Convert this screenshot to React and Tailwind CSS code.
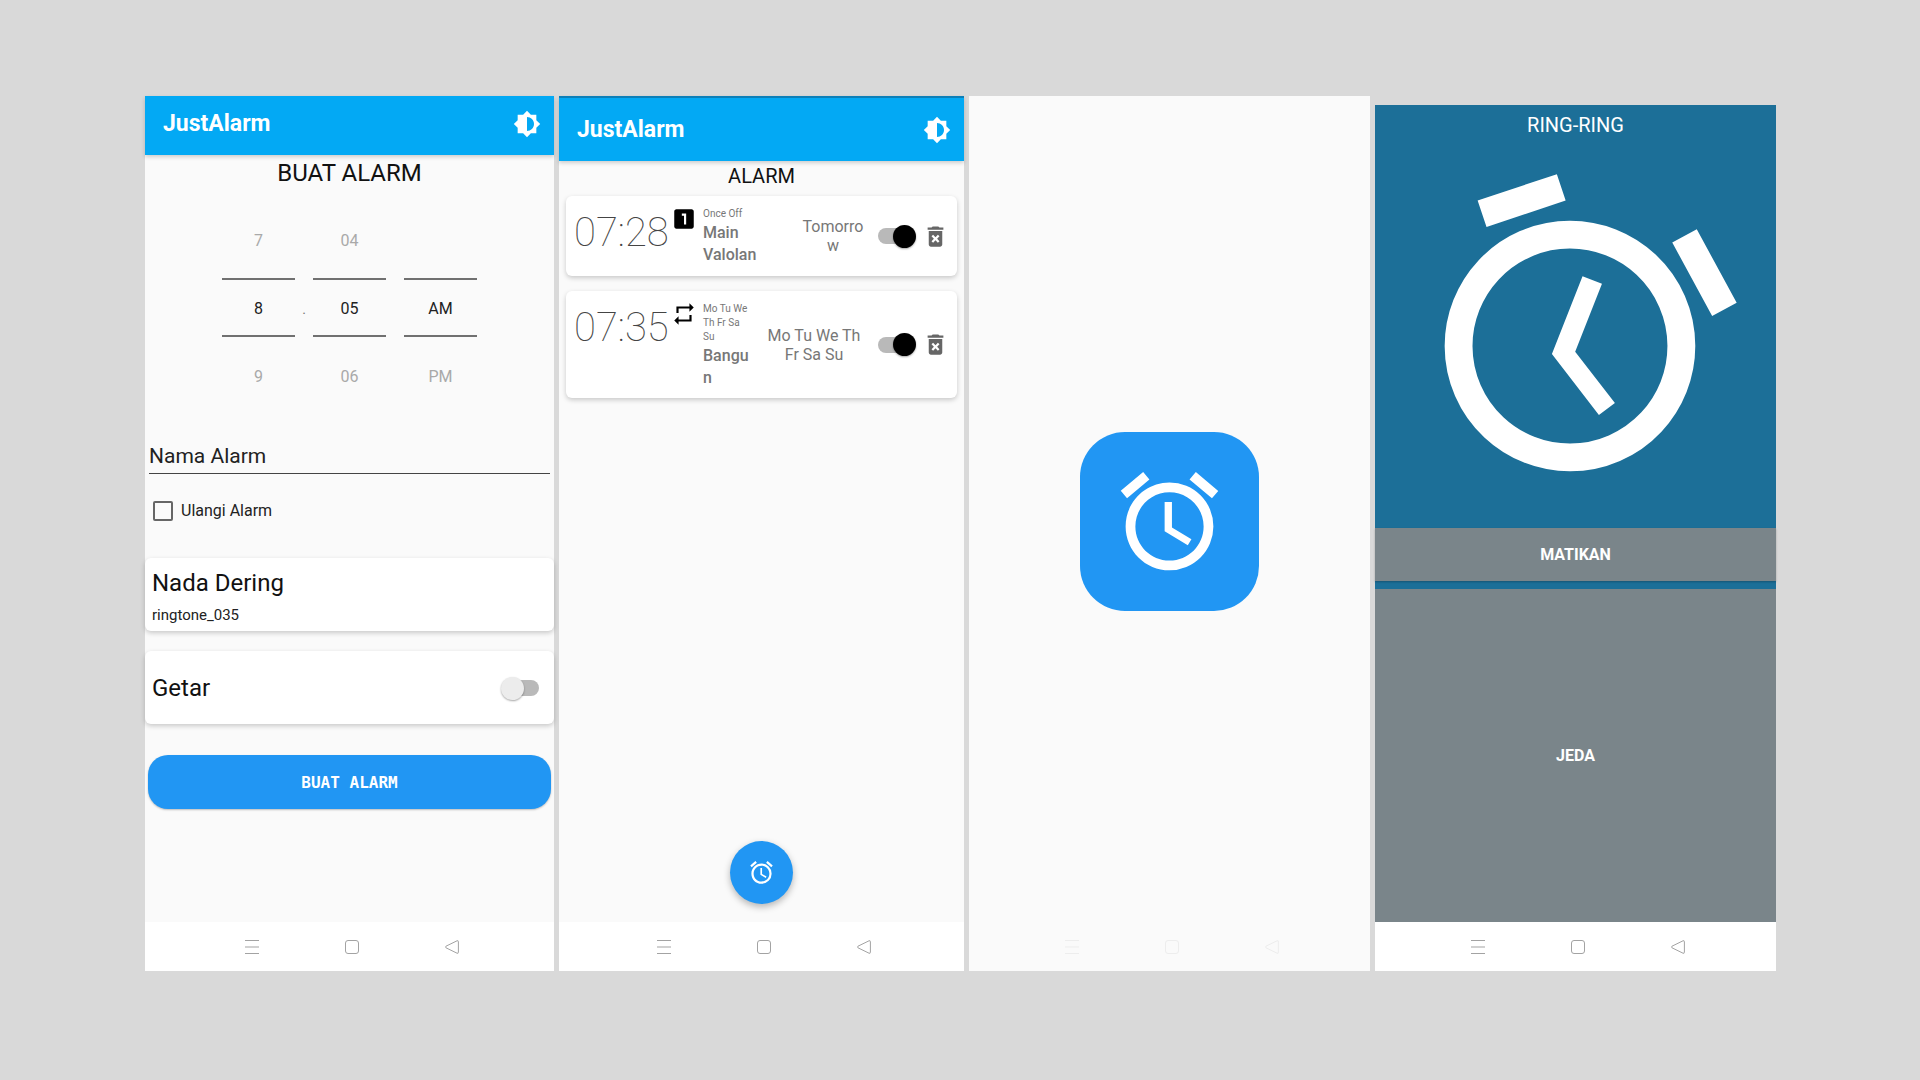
import { MdBrightness6, MdAccessAlarm, MdDeleteForever, MdLooksOne, MdRepeat } from "react-icons/md";

function TopBar({ className = "" }) {
  return (
    <header className={`flex shrink-0 items-center justify-between bg-[#03a9f4] pl-[18px] pr-[13px] text-white shadow-[0_2px_4px_rgba(0,0,0,0.18)] ${className}`}>
      <h1 className="pt-px text-[23px] font-bold leading-7">JustAlarm</h1>
      <button type="button" aria-label="Tema">
        <MdBrightness6 className="size-7" />
      </button>
    </header>
  );
}

function NavBar({ className = "bg-white text-[#a3a3a3]" }) {
  return (
    <nav className={`flex h-[49px] shrink-0 items-center justify-center gap-[84px] pl-1 ${className}`}>
      <button type="button" aria-label="Menu">
        <svg viewBox="0 0 16 16" className="size-4" fill="none" stroke="currentColor">
          <path d="M1 1.5h14M1 8h14M1 14.5h14" />
        </svg>
      </button>
      <button type="button" aria-label="Beranda">
        <svg viewBox="0 0 16 16" className="size-4" fill="none" stroke="currentColor">
          <rect x="1.5" y="1.5" width="13" height="13" rx="2.5" />
        </svg>
      </button>
      <button type="button" aria-label="Kembali">
        <svg viewBox="0 0 16 16" className="size-4" fill="none" stroke="currentColor" strokeLinejoin="round">
          <path d="M13 1.8 2 7.2q-1.2.8 0 1.6L13 14.2q1.4.5 1.4-.9V2.7q0-1.4-1.4-.9z" />
        </svg>
      </button>
    </nav>
  );
}

function Switch({ on = false, label }) {
  return (
    <label className="relative flex h-6 w-[38px] shrink-0 cursor-pointer items-center">
      <input type="checkbox" role="switch" defaultChecked={on} aria-label={label} className="peer sr-only" />
      <span className="ml-1 h-4 w-[34px] rounded-full bg-[#b9b9b9] peer-checked:ml-0" />
      <span className="absolute left-0 size-[23px] rounded-full bg-[#ececec] shadow-[0_1px_2px_rgba(0,0,0,0.35)] peer-checked:left-[15px] peer-checked:bg-black" />
    </label>
  );
}

function Wheel({ before, value, after }) {
  return (
    <div className="flex w-[73px] flex-col text-base text-[#a9a9a9]">
      <button type="button" className="h-6 leading-6">{before}</button>
      <div className="mt-[25px] flex h-[59px] items-center justify-center border-y-2 border-[#707070] pt-0.5 text-[#222]">
        {value}
      </div>
      <button type="button" className="mt-7 h-6 leading-6">{after}</button>
    </div>
  );
}

function CreateScreen() {
  return (
    <section className="flex flex-col bg-[#fafafa]">
      <TopBar className="h-[59px] pb-1" />
      <main className="flex flex-1 flex-col">
        <h2 className="mt-0.5 text-center text-2xl leading-8 text-[#111]">BUAT ALARM</h2>
        <div className="mt-10 flex justify-center gap-[18px]">
          <Wheel before="7" value="8" after="9" />
          <div className="-mx-[18px] flex w-[18px] items-center justify-center text-sm text-[#777]">.</div>
          <Wheel before="04" value="05" after="06" />
          <Wheel before="" value="AM" after="PM" />
        </div>
        <input
          type="text"
          aria-label="Nama Alarm"
          placeholder="Nama Alarm"
          className="mx-1 mt-[52px] h-[33px] border-b border-[#444] pb-0.5 text-[21px] text-[#222] outline-none placeholder:text-[#222]"
        />
        <label className="mt-[25px] flex items-center gap-2 pl-2 text-base leading-6 text-[#222]">
          <input type="checkbox" className="size-5 appearance-none rounded-xs border-2 border-[#666] checked:bg-[#666]" />
          Ulangi Alarm
        </label>
        <button type="button" className="mt-[35px] flex h-[73px] flex-col justify-center rounded-md bg-white pl-[7px] text-left shadow-[0_2px_5px_rgba(0,0,0,0.2)]">
          <span className="text-2xl leading-8 text-[#111]">Nada Dering</span>
          <span className="mt-1 mb-[-4px] text-[15px] leading-6 text-[#222]">ringtone_035</span>
        </button>
        <div className="mt-5 flex h-[73px] items-center justify-between rounded-md bg-white pl-[7px] pr-[15px] pt-px shadow-[0_2px_5px_rgba(0,0,0,0.2)]">
          <span className="text-2xl leading-8 text-[#111]">Getar</span>
          <Switch label="Getar" />
        </div>
        <button type="button" className="mx-[3px] mt-[31px] h-[54px] rounded-[20px] bg-[#2196f3] pt-px font-['DejaVu_Sans_Mono',monospace] text-base font-bold text-white shadow-[0_1px_2px_rgba(0,0,0,0.25)]">
          BUAT ALARM
        </button>
      </main>
      <NavBar />
    </section>
  );
}

function AlarmCard({ time, Icon, repeat, name, days, className, nameClass, daysClass }) {
  return (
    <li className={`flex rounded-md bg-white pl-2 pr-2 text-[#777] shadow-[0_2px_5px_rgba(0,0,0,0.2)] ${className}`}>
      <time className="w-[97px] shrink-0 pt-[13px] text-[40px] font-thin leading-12 text-[#444]">{time}</time>
      <Icon className="mt-[10px] size-[26px] shrink-0 text-black" />
      <div className={`ml-[6px] shrink-0 pt-[11px] ${nameClass}`}>
        <p className="text-[10px] leading-[14px]">{repeat}</p>
        <p className="mt-px text-base font-medium leading-[22px] wrap-anywhere">{name}</p>
      </div>
      <p className={`my-auto shrink-0 text-center text-base leading-[19px] wrap-anywhere ${daysClass}`}>{days}</p>
      <div className="ml-auto flex items-center gap-[6px]">
        <Switch on label={`Aktifkan ${time}`} />
        <button type="button" aria-label={`Hapus ${time}`}>
          <MdDeleteForever className="size-[27px] text-[#666]" />
        </button>
      </div>
    </li>
  );
}

function ListScreen() {
  return (
    <section className="flex flex-col bg-[#fafafa]">
      <TopBar className="h-[65px] border-t-2 border-[#0c7fb8]" />
      <main className="flex flex-1 flex-col">
        <h2 className="mt-[3px] text-center text-xl leading-6 text-[#111]">ALARM</h2>
        <ul className="mx-[7px] mt-2 flex flex-col gap-[15px]">
          <AlarmCard time="07:28" Icon={MdLooksOne} repeat="Once Off" name="Main Valolan" days="Tomorrow" className="min-h-[80px]" nameClass="w-[58px]" daysClass="ml-10 w-16" />
          <AlarmCard time="07:35" Icon={MdRepeat} repeat="Mo Tu We Th Fr Sa Su" name="Bangun" days="Mo Tu We Th Fr Sa Su" className="min-h-[107px]" nameClass="w-[49px]" daysClass="ml-3 w-[100px]" />
        </ul>
        <button type="button" aria-label="Tambah alarm" className="mx-auto mb-[18px] mt-auto grid size-[63px] place-items-center rounded-full bg-[#2196f3] text-white shadow-[0_3px_7px_rgba(0,0,0,0.28)]">
          <MdAccessAlarm className="size-[27px]" />
        </button>
      </main>
      <NavBar />
    </section>
  );
}

function SplashScreen() {
  return (
    <section className="flex flex-col bg-[#fafafa]">
      <main className="flex flex-1 items-center justify-center pt-6">
        <div className="grid size-[179px] place-items-center rounded-[45px] bg-[#2196f3] text-white">
          <MdAccessAlarm className="size-[117px]" />
        </div>
      </main>
      <NavBar className="bg-[#fafafa] text-[#ededed]" />
    </section>
  );
}

function RingScreen() {
  return (
    <section className="mt-[9px] flex flex-col bg-[#1c6f98] text-white">
      <h2 className="pt-2 text-center text-xl leading-6">RING-RING</h2>
      <svg viewBox="0 0 24 24" className="mx-auto mb-7 mt-[29px] w-5/6 overflow-visible" fill="currentColor" aria-hidden="true">
        <g transform="rotate(21.5 12 12)">
          <path d="m22 5.72-4.6-3.86-1.29 1.53 4.6 3.86zM7.88 3.39 6.6 1.86 2 5.71l1.29 1.53zM12.5 8H11v6l4.75 2.85.75-1.23-4-2.37z" />
          <circle cx="12" cy="13" r="8" fill="none" stroke="currentColor" strokeWidth="2" />
        </g>
      </svg>
      <button type="button" className="h-[53px] bg-[#7a858a] pt-px text-base font-bold shadow-[0_1px_2px_rgba(0,0,0,0.25)]">MATIKAN</button>
      <button type="button" className="mt-2 flex-1 bg-[#7a858a] pt-px text-base font-bold">JEDA</button>
      <NavBar />
    </section>
  );
}

export default function App() {
  return (
    <div className="grid min-h-screen grid-cols-[409fr_405fr_401fr_401fr] gap-[5px] bg-[#d9d9d9] pb-[109px] pl-[145px] pr-36 pt-24 font-[Roboto,sans-serif]">
      <CreateScreen />
      <ListScreen />
      <SplashScreen />
      <RingScreen />
    </div>
  );
}
